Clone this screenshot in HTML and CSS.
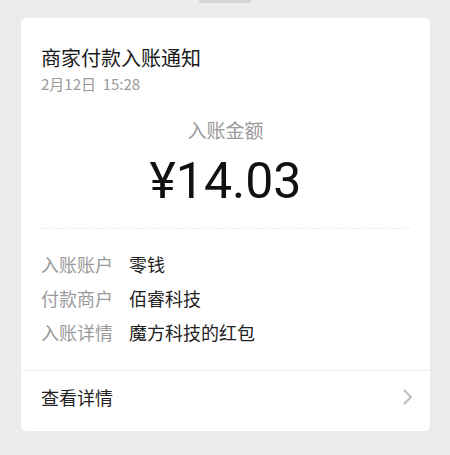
FILE: index.html
```html
<!DOCTYPE html>
<html lang="zh">
<head>
    <meta charset="UTF-8">
    <meta name="viewport" content="width=device-width, initial-scale=1.0">
    <title>商家付款入账通知</title>
    <link rel="stylesheet" href="styles.css">
</head>
<body>
    <div class="tab"></div>

    <div class="card">
        <div class="head">
            <h1 class="titulo">商家付款入账通知</h1>
            <div class="data">2月12日&nbsp;&nbsp;15:28</div>
        </div>

        <div class="valor">
            <div class="valor-label">入账金额</div>
            <div class="valor-num">¥14.03</div>
        </div>

        <div class="linhas">
            <div class="linha"><span class="rotulo">入账账户</span><span class="info">零钱</span></div>
            <div class="linha"><span class="rotulo">付款商户</span><span class="info">佰睿科技</span></div>
            <div class="linha"><span class="rotulo">入账详情</span><span class="info">魔方科技的红包</span></div>
        </div>

        <div class="detalhes">
            <span>查看详情</span>
            <svg class="seta" width="12" height="18" viewBox="0 0 12 18">
                <path d="M2 2 L9 9 L2 16" fill="none" stroke="#bdbdbd" stroke-width="2"/>
            </svg>
        </div>
    </div>
</body>
</html>
```

FILE: styles.css
```css
body {
    background-color: #ebebeb;
    font-family: "Noto Sans CJK SC", "Noto Sans", sans-serif;
    margin: 0;
    padding: 0 20px 0 21px;
}

.tab {
    width: 52px;
    height: 3px;
    margin: 0 auto;
    position: relative;
    left: -1px;
    background-color: #d6d6d6;
    border-radius: 0 0 2px 2px;
}

.card {
    margin-top: 15px;
    width: 409px;
    background-color: #fff;
    border-radius: 5px;
}

.head {
    padding: 26px 20px 0 20px;
}

.titulo {
    margin: 0;
    font-size: 20px;
    font-weight: normal;
    line-height: 28px;
    color: #1a1a1a;
}

.data {
    font-size: 15px;
    line-height: 20px;
    margin-top: 2px;
    color: #9a9a9a;
}

.valor {
    margin: 0 20px;
    padding: 23px 0 17px 0;
    text-align: center;
    border-bottom: 1px dashed #ececec;
}

.valor-label {
    font-size: 19px;
    line-height: 26px;
    color: #9a9a9a;
}

.valor-num {
    font-family: Roboto, "Noto Sans CJK SC", sans-serif;
    font-size: 50px;
    line-height: 60px;
    margin-top: 8px;
    color: #111;
}

.linhas {
    padding: 18px 20px 21px 20px;
}

.linha {
    font-size: 18px;
    line-height: 34px;
    color: #222;
}

.rotulo {
    display: inline-block;
    width: 88px;
    color: #9a9a9a;
}

.detalhes {
    display: flex;
    align-items: center;
    justify-content: space-between;
    height: 52px;
    padding: 0 16px 8px 20px;
    border-top: 1px solid #eeeeee;
    font-size: 18px;
    color: #222;
}
```
